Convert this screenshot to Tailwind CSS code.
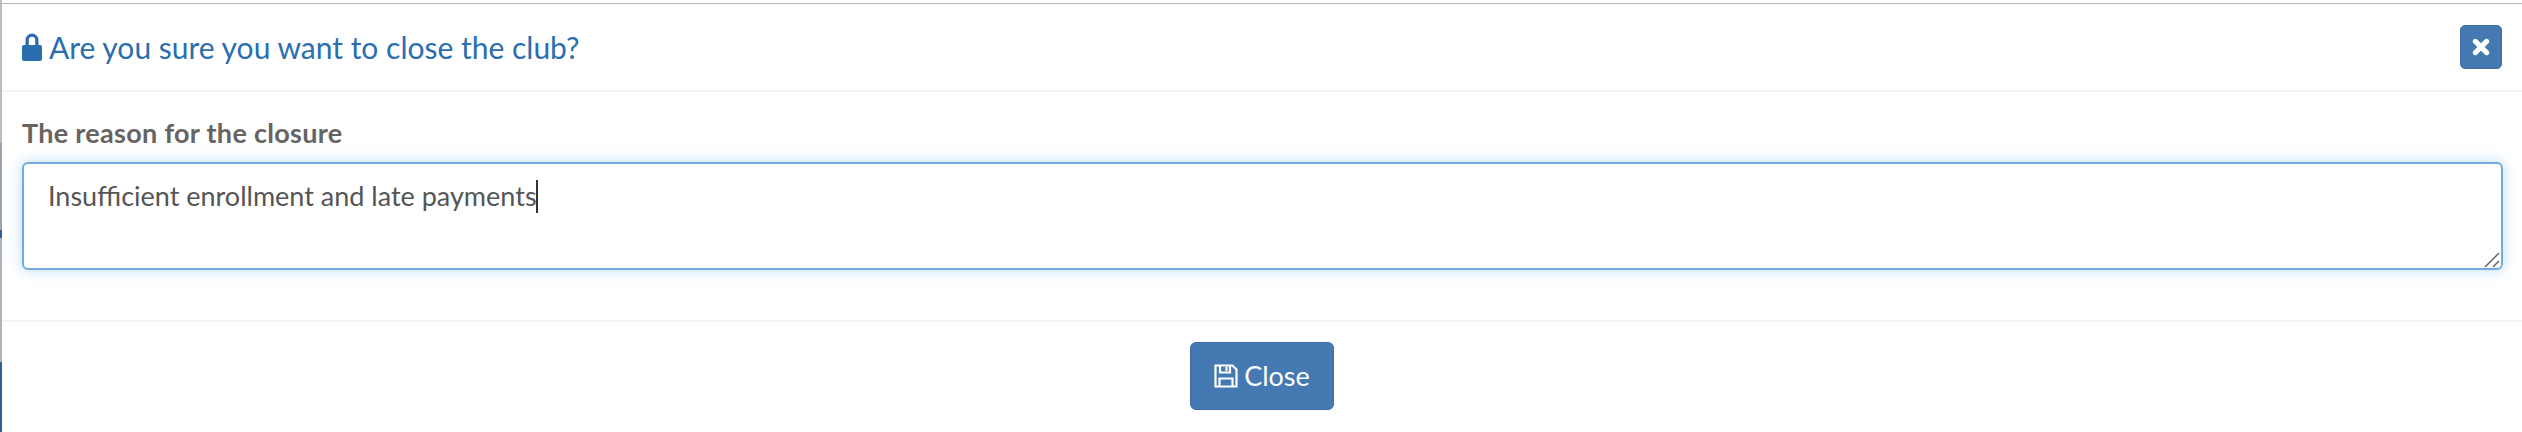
<!DOCTYPE html>
<html>
<head>
<meta charset="utf-8">
<script src="https://cdn.jsdelivr.net/npm/@tailwindcss/browser@4"></script>
</head>
<body class="bg-white">
<div class="relative h-[432px] w-[2522px] overflow-hidden bg-white font-['Lato',sans-serif] pt-[3px]">
  <div class="absolute left-0 top-0 flex h-full w-[2px] flex-col">
    <div class="h-[143px] bg-[#b8bcc4]"></div>
    <div class="h-[87px] bg-[#9da3ae]"></div>
    <div class="h-[8px] bg-[#2f5f96]"></div>
    <div class="h-[124px] bg-[#adb2bb]"></div>
    <div class="flex-1 bg-[#2f5f96]"></div>
  </div>
  <div class="ml-[2px] flex h-[89px] items-center justify-between border-t border-b-[2px] border-t-[#b5b5b5] border-b-[#f3f3f3] pl-[20px] pr-[20px]">
    <div class="flex items-center gap-[7px] text-[#2a6eb0]">
      <svg class="h-[30px] w-[20px]" viewBox="0 0 20 30" fill="currentColor"><path d="M3.500 13V8a6.500 6.500 0 0 1 13 0v5h1.500c1.100 0 2 .9 2 2v12c0 1.100-.9 2-2 2H2c-1.100 0-2-.9-2-2V15c0-1.100.9-2 2-2h1.500zm3.300 0h6.400V8a3.200 3.200 0 0 0-6.400 0v5z"/></svg>
      <h4 class="text-[30px] leading-[36px]">Are you sure you want to close the club?</h4>
    </div>
    <button class="flex h-[44px] w-[42px] items-center justify-center rounded-[5px] border border-[#3d6c9f] bg-[#4479b2] text-white">
      <svg class="h-[18px] w-[18px]" viewBox="0 0 16 16" fill="none" stroke="currentColor" stroke-width="4.500" stroke-linecap="round"><path d="M3 3l10 10M13 3L3 13"/></svg>
    </button>
  </div>
  <div class="ml-[2px] h-[230px] border-b-[2px] border-b-[#f3f3f3] pl-[20px] pr-[19px] pt-[25px]">
    <label class="block text-[27px] font-bold leading-[32px] tracking-[0.3px] text-[#666362]">The reason for the closure</label>
    <div class="relative mt-[13px]">
      <textarea class="block h-[108px] w-full resize-none rounded-[6px] border-2 border-[#73aae3] bg-white px-[24px] py-[14px] font-['Lato',sans-serif] text-[27px] leading-[36px] text-[#555555] shadow-[0_0_14px_rgba(102,175,233,0.45)] outline-none">Insufficient enrollment and late payments</textarea>
      <div class="absolute left-[514px] top-[18px] h-[33px] w-[2px] bg-[#333333]"></div>
      <svg class="pointer-events-none absolute bottom-[2px] right-[3px] h-[16px] w-[16px]" viewBox="0 0 16 16" stroke="#666666" stroke-width="1.500" fill="none"><path d="M1 15L15 1M9 15l6-6"/></svg>
    </div>
  </div>
  <div class="ml-[2px] flex justify-center pt-[20px]">
    <button class="flex h-[68px] w-[144px] items-center justify-center gap-[6px] rounded-[6px] border border-[#3d6c9f] bg-[#4479b2] text-[27px] text-white">
      <svg class="h-[24px] w-[24px]" viewBox="0 0 24 24" fill="none" stroke="currentColor" stroke-width="2.200"><path d="M1.500 1.500h17l4 4v17h-21z"/><path d="M6 1.500v7h10v-7M12.500 3v4"/><path d="M5.500 22.500v-8h13v8"/></svg>
      <span>Close</span>
    </button>
  </div>
</div>
</body>
</html>
